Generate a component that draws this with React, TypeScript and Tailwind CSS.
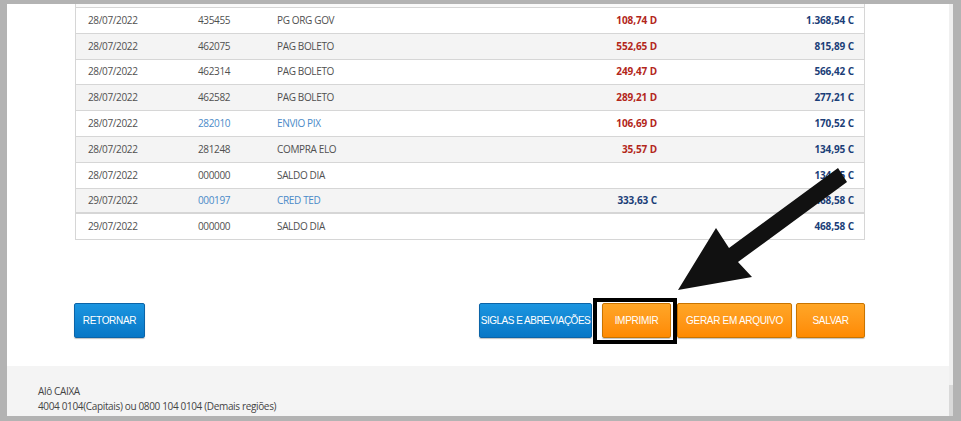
import React from 'react';

type Row = {
  date: string;
  doc: string;
  desc: string;
  debit?: string;
  debitType?: 'D' | 'C';
  balance: string;
  link?: boolean;
  thick?: boolean;
};

const rows: Row[] = [
  { date: '28/07/2022', doc: '435455', desc: 'PG ORG GOV', debit: '108,74 D', debitType: 'D', balance: '1.368,54 C' },
  { date: '28/07/2022', doc: '462075', desc: 'PAG BOLETO', debit: '552,65 D', debitType: 'D', balance: '815,89 C' },
  { date: '28/07/2022', doc: '462314', desc: 'PAG BOLETO', debit: '249,47 D', debitType: 'D', balance: '566,42 C' },
  { date: '28/07/2022', doc: '462582', desc: 'PAG BOLETO', debit: '289,21 D', debitType: 'D', balance: '277,21 C' },
  { date: '28/07/2022', doc: '282010', desc: 'ENVIO PIX', debit: '106,69 D', debitType: 'D', balance: '170,52 C', link: true },
  { date: '28/07/2022', doc: '281248', desc: 'COMPRA ELO', debit: '35,57 D', debitType: 'D', balance: '134,95 C' },
  { date: '28/07/2022', doc: '000000', desc: 'SALDO DIA', balance: '134,95 C' },
  { date: '29/07/2022', doc: '000197', desc: 'CRED TED', debit: '333,63 C', debitType: 'C', balance: '468,58 C', link: true, thick: true },
  { date: '29/07/2022', doc: '000000', desc: 'SALDO DIA', balance: '468,58 C' },
];

const blueBtn =
  'h-[35px] whitespace-nowrap rounded-[2px] border border-[#0b64a8] bg-gradient-to-b from-[#1b95e0] to-[#0877c6] text-white text-[10px] tracking-[-0.3px] shadow-[0_1px_1px_rgba(0,0,0,0.25)]';
const orangeBtn =
  'h-[35px] whitespace-nowrap rounded-[2px] border border-[#c97400] bg-gradient-to-b from-[#ffa626] to-[#ff8a00] text-white text-[10px] tracking-[-0.3px] shadow-[0_1px_1px_rgba(0,0,0,0.25)]';

export default function App() {
  return (
    <div className="relative w-[961px] h-[421px] bg-[#b3b3b3] pt-[4px] pl-[7px] pr-[8px] pb-[5px] flex font-['Open_Sans',sans-serif]">
      <div className="flex-1 flex flex-col">
        {/* main area */}
        <div className="h-[362px] bg-white pl-[68px] pr-[84px]">
          {/* end of the row above, scrolled out */}
          <div className="h-[4px] border-x border-b border-[#d6d6d6] bg-[#fafafa]" />
          {rows.map((r, i) => (
            <div
              key={i}
              className={
                'flex items-center h-[25.8px] border-x border-[#d6d6d6] pl-[12px] pr-[10px] text-[10px] tracking-[-0.35px] ' +
                (r.thick ? 'border-b-2 ' : 'border-b ') +
                (i % 2 === 1 ? 'bg-[#f4f4f4]' : 'bg-white')
              }
            >
              <div className="w-[110px] text-[#505050]">{r.date}</div>
              <div className={'w-[79px] ' + (r.link ? 'text-[#4a8ac8]' : 'text-[#505050]')}>{r.doc}</div>
              <div className={'flex-1 ' + (r.link ? 'text-[#4a8ac8]' : 'text-[#505050]')}>{r.desc}</div>
              <div
                className={
                  'w-[100px] text-right font-bold tracking-[-0.1px] ' +
                  (r.debitType === 'D' ? 'text-[#b3261a]' : 'text-[#1b3e78]')
                }
              >
                {r.debit ?? ''}
              </div>
              <div className="w-[197px] text-right font-bold tracking-[-0.1px] text-[#1b3e78]">{r.balance}</div>
            </div>
          ))}

          <div className="flex mt-[63px] -ml-[1px] font-['Liberation_Sans',sans-serif]">
            <button className={blueBtn + ' w-[71px]'}>RETORNAR</button>
            <div className="flex-1" />
            <button className={blueBtn + ' w-[113px] tracking-[-0.5px]'}>SIGLAS E ABREVIAÇÕES</button>
            <div className="relative ml-[10px]">
              <button className={orangeBtn + ' w-[69px]'}>IMPRIMIR</button>
              <div className="absolute left-[-9px] right-[-6px] top-[-5px] bottom-[-6px] border-4 border-black" />
            </div>
            <button className={orangeBtn + ' w-[115px] ml-[6px]'}>GERAR EM ARQUIVO</button>
            <button className={orangeBtn + ' w-[69px] ml-[4px]'}>SALVAR</button>
          </div>
        </div>

        {/* footer */}
        <div className="flex-1 bg-[#f4f4f4] pl-[31px] pt-[18px] text-[10px] leading-[15px] text-[#444] tracking-[-0.35px]">
          <div>Alô CAIXA</div>
          <div>4004 0104(Capitais) ou 0800 104 0104 (Demais regiões)</div>
        </div>
      </div>

      {/* scrollbar strip */}
      <div className="w-[4px] flex flex-col">
        <div className="h-[381px] bg-[#f0f0f0]" />
        <div className="flex-1 bg-[#d9d9d9]" />
      </div>

      {/* annotation arrow */}
      <svg className="absolute left-0 top-0 pointer-events-none" width="961" height="421" viewBox="0 0 961 421">
        <polygon points="838,168 847,182 738,262 752,277 678,290 716,228 729,248" fill="#111" />
      </svg>
    </div>
  );
}
